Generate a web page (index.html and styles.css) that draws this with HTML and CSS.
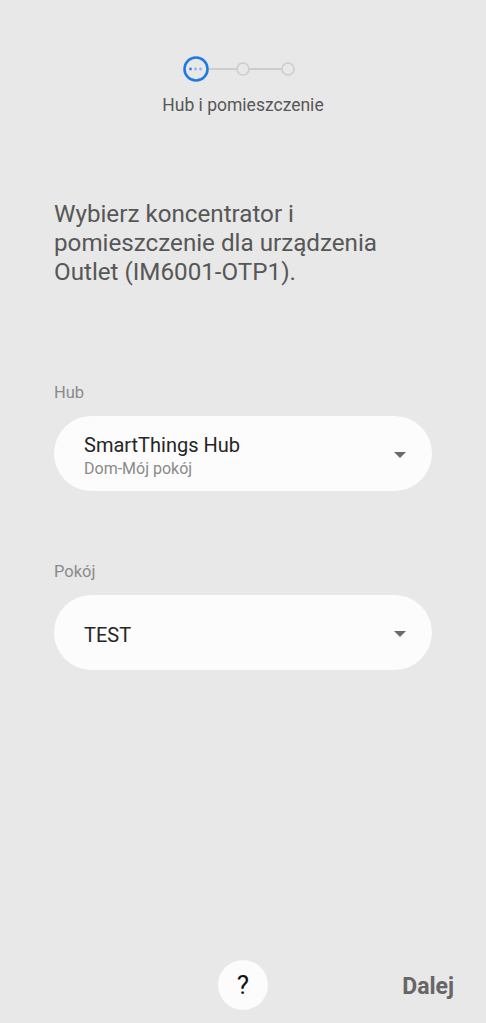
FILE: index.html
```html
<!DOCTYPE html>
<html>
<head>
    <title>Hub i pomieszczenie</title>
    <link rel="stylesheet" href="styles.css">
</head>
<body>
    <div class="page">
        <!-- step indicator -->
        <div class="stepper">
            <svg width="126" height="30" viewBox="0 0 126 30">
                <line x1="29" y1="15" x2="57" y2="15" stroke="#cdcdcd" stroke-width="2"/>
                <line x1="69" y1="15" x2="102" y2="15" stroke="#cdcdcd" stroke-width="2"/>
                <circle cx="16" cy="15" r="11.5" fill="none" stroke="#1e7ae2" stroke-width="2.6"/>
                <circle cx="10.5" cy="15" r="1.4" fill="#3b7fd0"/>
                <circle cx="15.5" cy="15" r="1.4" fill="#8fb4e2"/>
                <circle cx="20.5" cy="15" r="1.4" fill="#8fb4e2"/>
                <circle cx="63" cy="15" r="6" fill="#e8e8e8" stroke="#cdcdcd" stroke-width="1.6"/>
                <circle cx="108" cy="15" r="6" fill="#e8e8e8" stroke="#cdcdcd" stroke-width="1.6"/>
            </svg>
        </div>
        <div class="step-title">Hub i pomieszczenie</div>

        <h1 class="question">Wybierz koncentrator i pomieszczenie dla urządzenia Outlet (IM6001-OTP1).</h1>

        <div class="field-label first">Hub</div>
        <div class="select">
            <div class="select-text">
                <div class="select-main">SmartThings Hub</div>
                <div class="select-sub">Dom-Mój pokój</div>
            </div>
            <span class="caret"></span>
        </div>

        <div class="field-label">Pokój</div>
        <div class="select">
            <div class="select-text">
                <div class="select-main">TEST</div>
            </div>
            <span class="caret"></span>
        </div>

        <!-- bottom actions -->
        <div class="footer">
            <span></span>
            <button class="help">?</button>
            <button class="next">Dalej</button>
        </div>
    </div>
</body>
</html>
```

FILE: styles.css
```css
/* light grey setup screen */
:root {
    --bg: #e8e8e8;
    --card: #fcfcfc;
    --text-dark: #252525;
    --text-mid: #575757;
    --text-light: #8a8a8a;
}

body {
    margin: 0;
    background-color: var(--bg);
    font-family: Roboto, "Noto Sans", sans-serif;
}

.page {
    display: flex;
    flex-direction: column;
    height: 1023px;
    box-sizing: border-box;
    padding: 54px 54px 0 54px;
}

.stepper {
    display: flex;
    justify-content: center;
    height: 30px;
}

.stepper svg {
    display: block;
}

.step-title {
    margin-top: 11px;
    text-align: center;
    font-size: 17.5px;
    line-height: 20px;
    color: var(--text-mid);
}

.question {
    margin: 85px 0 0 0;
    font-size: 24.2px;
    line-height: 29px;
    font-weight: 400;
    color: var(--text-mid);
    padding-right: 20px;
}

.field-label {
    margin-top: 71px;
    font-size: 16.5px;
    line-height: 20px;
    color: var(--text-light);
}

.field-label.first {
    margin-top: 96px;
}

/* rounded dropdown */
.select {
    margin-top: 13px;
    height: 75px;
    border-radius: 38px;
    background-color: var(--card);
    display: flex;
    align-items: center;
    padding: 0 26px 0 30px;
}

.select-text {
    flex: 1;
    padding-top: 4px;
}

.select-main {
    font-size: 20px;
    line-height: 24px;
    color: var(--text-dark);
}

.select-sub {
    margin-top: 2px;
    font-size: 16px;
    line-height: 20px;
    color: var(--text-light);
}

.caret {
    width: 0;
    height: 0;
    border-left: 6px solid transparent;
    border-right: 6px solid transparent;
    border-top: 6px solid #6a6a6a;
    margin-top: 3px;
}

.footer {
    margin-top: auto;
    margin-left: -54px;
    margin-right: -54px;
    display: grid;
    grid-template-columns: 1fr auto 1fr;
    align-items: center;
    padding-bottom: 13px;
}

.help {
    width: 50px;
    height: 50px;
    border-radius: 50%;
    border: none;
    background-color: var(--card);
    font-family: Roboto, sans-serif;
    font-size: 26px;
    color: #111;
    padding: 0;
}

.next {
    justify-self: end;
    margin-right: 32px;
    margin-top: 2px;
    border: none;
    background: none;
    padding: 0;
    font-family: Roboto, sans-serif;
    font-size: 23px;
    font-weight: 700;
    color: #666;
}
```
